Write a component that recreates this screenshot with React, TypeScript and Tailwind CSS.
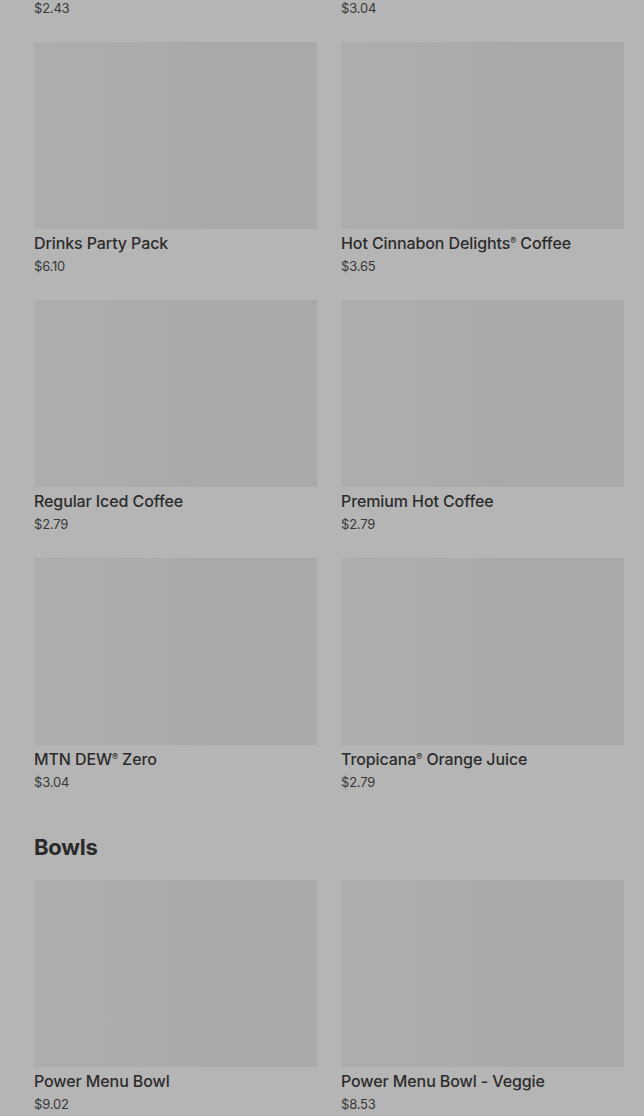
import { Fragment } from 'react';

type Item = { name: string; price: string };

const drinks: Item[] = [
  { name: 'Drinks Party Pack', price: '$6.10' },
  { name: 'Hot Cinnabon Delights® Coffee', price: '$3.65' },
  { name: 'Regular Iced Coffee', price: '$2.79' },
  { name: 'Premium Hot Coffee', price: '$2.79' },
  { name: 'MTN DEW® Zero', price: '$3.04' },
  { name: 'Tropicana® Orange Juice', price: '$2.79' },
];

const bowls: Item[] = [
  { name: 'Power Menu Bowl', price: '$9.02' },
  { name: 'Power Menu Bowl - Veggie', price: '$8.53' },
];

// the ® on menu names sits small and raised
function Name({ text }: { text: string }) {
  const parts = text.split('®');
  return (
    <>
      {parts.map((p, i) => (
        <Fragment key={i}>
          {p}
          {i < parts.length - 1 && <sup className="text-[9px] top-[-0.6em]">®</sup>}
        </Fragment>
      ))}
    </>
  );
}

function ItemCard({ item }: { item: Item }) {
  return (
    <div className="flex flex-col">
      <div className="relative h-[187px] w-full overflow-hidden bg-[#a9a9a9]">
        {/* loading shimmer */}
        <div className="absolute inset-y-0 left-0 w-[62%] bg-gradient-to-r from-[#adadad] via-[#acacac] to-transparent" />
      </div>
      <h3 className="mt-[2px] truncate text-[16px] leading-6 font-medium tracking-[-0.1px] text-[#2c2c2c]">
        <Name text={item.name} />
      </h3>
      <span className="mt-[1px] text-[13px] leading-5 tracking-[-0.2px] text-[#383838]">{item.price}</span>
    </div>
  );
}

export default function App() {
  return (
    <div className="h-[1116px] overflow-hidden bg-[#b5b5b5] font-['Inter','Liberation_Sans',sans-serif]">
      <div className="pl-[34px] pr-[20px]">
        {/* tail of the row scrolled above */}
        <div className="-mt-[2px] grid grid-cols-2 gap-6 text-[13px] leading-5 tracking-[-0.2px] text-[#383838]">
          <span>$2.43</span>
          <span>$3.04</span>
        </div>

        <section className="mt-6">
          <div className="grid grid-cols-2 gap-6">
            {drinks.map((item) => (
              <ItemCard key={item.name} item={item} />
            ))}
          </div>
        </section>

        <section className="mt-[39px]">
          <h2 className="mb-[17px] text-[22px] leading-8 font-bold tracking-[-0.2px] text-[#2a2a2a]">Bowls</h2>
          <div className="grid grid-cols-2 gap-6">
            {bowls.map((item) => (
              <ItemCard key={item.name} item={item} />
            ))}
          </div>
        </section>
      </div>
    </div>
  );
}
